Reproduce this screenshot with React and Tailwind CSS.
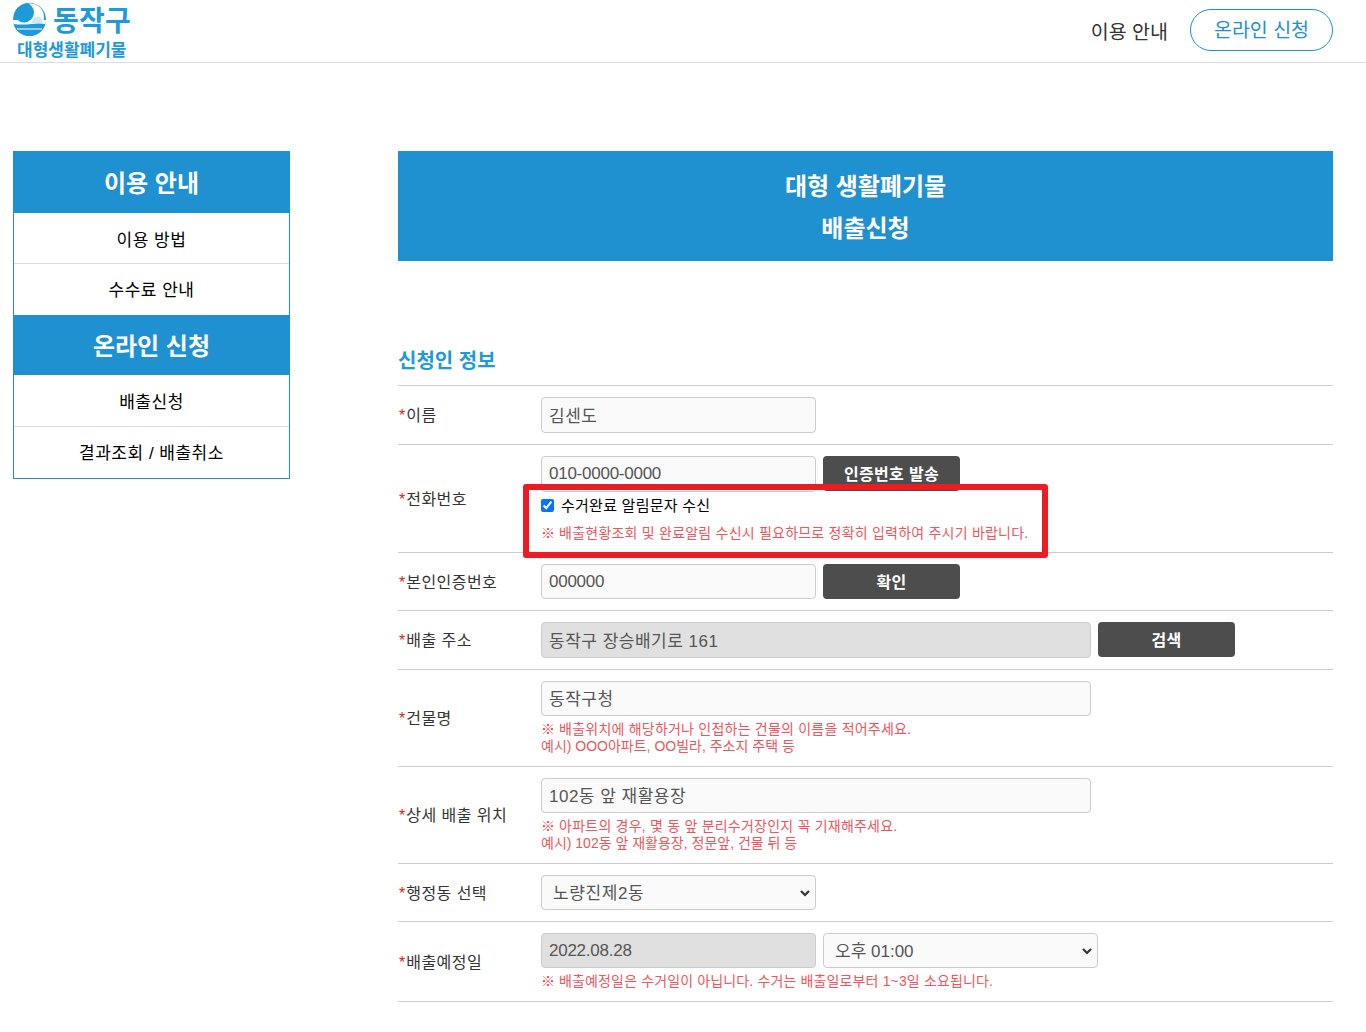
const FONT = { fontFamily: '"Liberation Sans","Noto Sans CJK KR",sans-serif' };

function Input({ value, className = "", gray, kr }) {
  return (
    <div className={`rounded-[4px] border border-[#cccccc] pl-[7px] flex items-center text-[17px] text-[#555555] ${kr ? "pt-[3px] tracking-[0.5px]" : "tracking-[-0.25px]"} ${gray ? "bg-[#e0e0e0]" : "bg-[#fafafa]"} ${className}`}>
      {value}
    </div>
  );
}

function Select({ value, className = "", kr }) {
  return (
    <div className={`h-[35px] rounded-[4px] border border-[#cccccc] bg-[#fafafa] pl-[11px] pr-[4px] flex items-center justify-between text-[17px] text-[#555555] ${className}`}>
      <span className={`pt-[2px] ${kr ? "tracking-[0.6px]" : ""}`}>{value}</span>
      <svg width="12" height="12" viewBox="0 0 12 12" fill="none" stroke="#333333" strokeWidth="2.2"><path d="M2 4l4 4 4-4" /></svg>
    </div>
  );
}

function Btn({ children }) {
  return (
    <div className="h-[35px] w-[137px] pt-[2px] rounded-[4px] bg-[#4d4d4d] text-white font-bold text-[16px] tracking-[0.3px] flex items-center justify-center">
      {children}
    </div>
  );
}

function Note({ children, track = "" }) {
  return <div className={`text-[14px] leading-[17px] text-[#f0555c] ${track}`}>{children}</div>;
}

function Mark() {
  return <span className="font-['Noto_Sans_CJK_KR'] font-black text-[#e83a42] text-[14px] tracking-normal">※</span>;
}

function Row({ label, h, children }) {
  return (
    <div className={`flex border-b border-[#cccccc] ${h}`}>
      <div className="w-[143px] shrink-0 flex items-center text-[16px] text-[#333333] pl-[1px] pt-[2px]">
        <span className="text-[#e02020] mr-[1px]">*</span><span className="tracking-[0.45px]">{label}</span>
      </div>
      <div className="flex-1 pt-[11px]">{children}</div>
    </div>
  );
}

function SideHead({ children, h, pad }) {
  return <div className={`${h} ${pad} bg-[#2091d0] text-white font-bold text-[24px] flex items-center justify-center`}>{children}</div>;
}

function SideItem({ children, h, last, pad }) {
  return <div className={`${h} ${pad} flex items-center justify-center text-[17px] tracking-[0.5px] text-black ${last ? "" : "border-b border-[#dddddd]"}`}>{children}</div>;
}

export default function App() {
  return (
    <div style={FONT} className="relative w-[1366px] h-[1032px] overflow-hidden bg-white">
      <header className="h-[63px] border-b border-[#dddddd] flex justify-between pl-[13px] pr-[33px]">
        <div className="w-[130px]">
          <div className="flex items-center h-[38px] gap-[7px]">
            <svg width="33" height="33" viewBox="0 0 33 33">
              <defs>
                <clipPath id="logo-clip"><circle cx="16.5" cy="16.5" r="16.5" /></clipPath>
              </defs>
              <g clipPath="url(#logo-clip)">
                <rect width="33" height="33" fill="#1f9ad9" />
                <circle cx="17.5" cy="14" r="13.5" fill="#ffffff" />
                <rect x="0" y="17" width="33" height="5" fill="#ffffff" />
                <circle cx="11" cy="9.5" r="10" fill="#1f9ad9" />
                <path d="M18 20 Q21 13.5 25 13.5 Q29 14 30 20Z" fill="#cfe8f6" />
                <path d="M0 21 Q10 22 18 21 Q26 20 33 21 V33 H0Z" fill="#1f9ad9" />
                <path d="M4 25.5 H29 V26.5 H4Z" fill="#ffffff" />
              </g>
            </svg>
            <span className="text-[#1f9ad9] font-bold text-[28px] leading-none tracking-[0.2px] mt-[5px]">동작구</span>
          </div>
          <div className="text-[#1f9ad9] font-bold text-[17px] leading-[20px] pl-[4px] mt-[3px]">대형생활폐기물</div>
        </div>
        <div className="flex items-center gap-[22px] mt-[-2px]">
          <span className="text-[19.5px] text-[#333333] pt-[5px]">이용 안내</span>
          <span className="w-[143px] h-[42px] pt-[2px] rounded-full border border-[#2091d0] text-[#2091d0] text-[19.5px] flex items-center justify-center">온라인 신청</span>
        </div>
      </header>

      <div className="flex pl-[13px] pr-[33px] pt-[88px]">
        <aside className="w-[277px] h-[328px] shrink-0 border border-[#2091d0]">
          <SideHead h="h-[61px]" pad="pt-[2px]">이용 안내</SideHead>
          <SideItem h="h-[51px]" pad="pt-[6px]">이용 방법</SideItem>
          <SideItem h="h-[51px]" pad="pt-[2px]" last>수수료 안내</SideItem>
          <SideHead h="h-[60px]" pad="pt-[4px]">온라인 신청</SideHead>
          <SideItem h="h-[52px]" pad="pt-[4px]">배출신청</SideItem>
          <SideItem h="h-[51px]" pad="pt-[2px]" last>결과조회 / 배출취소</SideItem>
        </aside>

        <main className="ml-[108px] w-[935px]">
          <div className="h-[110px] pt-[4px] bg-[#2091d0] text-white font-bold text-[24px] flex flex-col items-center justify-center leading-[42px]">
            <div>대형 생활폐기물</div>
            <div>배출신청</div>
          </div>
          <h2 className="mt-[88px] h-[37px] text-[#1f9ad9] font-bold text-[20px] leading-[24px] border-b border-[#cccccc]">신청인 정보</h2>

          <Row label="이름" h="h-[59px]">
            <Input value="김센도" className="w-[275px] h-[36px]" kr />
          </Row>
          <Row label="전화번호" h="h-[108px]">
            <div className="flex gap-[7px]">
              <Input value="010-0000-0000" className="w-[275px] h-[36px]" />
              <Btn>인증번호 발송</Btn>
            </div>
            <label className="flex items-center mt-[6px] h-[17px] text-[15px] tracking-[0.25px] text-black">
              <input type="checkbox" defaultChecked className="w-[13px] h-[13px] m-0 mr-[7px] mt-[-2px]" />
              수거완료 알림문자 수신
            </label>
            <div className="mt-[9px]"><Note track="tracking-[0.22px]"><Mark /> 배출현황조회 및 완료알림 수신시 필요하므로 정확히 입력하여 주시기 바랍니다.</Note></div>
          </Row>
          <Row label="본인인증번호" h="h-[58px]">
            <div className="flex gap-[7px]">
              <Input value="000000" className="w-[275px] h-[35px]" />
              <Btn>확인</Btn>
            </div>
          </Row>
          <Row label="배출 주소" h="h-[59px]">
            <div className="flex gap-[7px]">
              <Input value="동작구 장승배기로 161" className="w-[550px] h-[36px]" gray kr />
              <Btn>검색</Btn>
            </div>
          </Row>
          <Row label="건물명" h="h-[97px]">
            <Input value="동작구청" className="w-[550px] h-[35px]" kr />
            <div className="mt-[4px]">
              <Note track="tracking-[0.22px]"><Mark /> 배출위치에 해당하거나 인접하는 건물의 이름을 적어주세요.</Note>
              <Note>예시) OOO아파트, OO빌라, 주소지 주택 등</Note>
            </div>
          </Row>
          <Row label="상세 배출 위치" h="h-[97px]">
            <Input value="102동 앞 재활용장" className="w-[550px] h-[35px]" kr />
            <div className="mt-[4px]">
              <Note track="tracking-[0.22px]"><Mark /> 아파트의 경우, 몇 동 앞 분리수거장인지 꼭 기재해주세요.</Note>
              <Note>예시) 102동 앞 재활용장, 정문앞, 건물 뒤 등</Note>
            </div>
          </Row>
          <Row label="행정동 선택" h="h-[58px]">
            <Select value="노량진제2동" className="w-[275px]" kr />
          </Row>
          <Row label="배출예정일" h="h-[80px]">
            <div className="flex gap-[7px]">
              <Input value="2022.08.28" className="w-[275px] h-[35px]" gray />
              <Select value="오후 01:00" className="w-[275px]" />
            </div>
            <div className="mt-[4px]"><Note track="tracking-[0.14px]"><Mark /> 배출예정일은 수거일이 아닙니다. 수거는 배출일로부터 1~3일 소요됩니다.</Note></div>
          </Row>
        </main>
      </div>

      <div className="absolute left-[523px] top-[484px] w-[525px] h-[74px] border-[6px] border-[#ed1c24] rounded-[3px]" />
    </div>
  );
}
